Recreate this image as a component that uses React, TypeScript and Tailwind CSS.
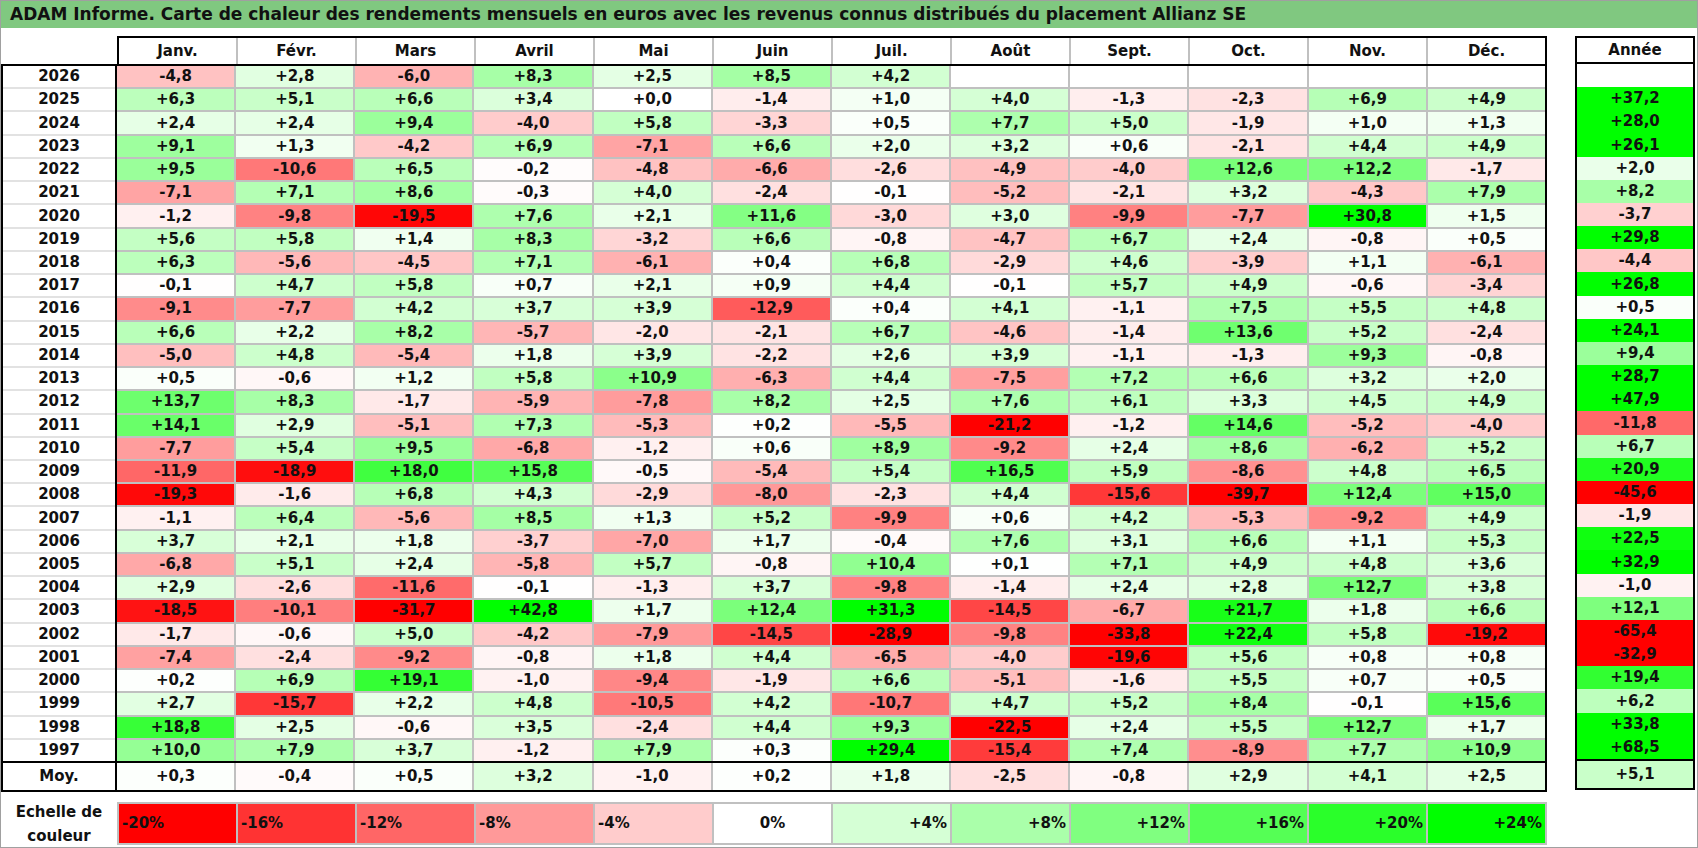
import React from "react";

const MONTHS = ["Janv.", "Févr.", "Mars", "Avril", "Mai", "Juin", "Juil.", "Août", "Sept.", "Oct.", "Nov.", "Déc."];

// year | 12 months | année  ("_" = empty)
const RAW = `2026|-4,8 +2,8 -6,0 +8,3 +2,5 +8,5 +4,2 _ _ _ _ _|_
2025|+6,3 +5,1 +6,6 +3,4 +0,0 -1,4 +1,0 +4,0 -1,3 -2,3 +6,9 +4,9|+37,2
2024|+2,4 +2,4 +9,4 -4,0 +5,8 -3,3 +0,5 +7,7 +5,0 -1,9 +1,0 +1,3|+28,0
2023|+9,1 +1,3 -4,2 +6,9 -7,1 +6,6 +2,0 +3,2 +0,6 -2,1 +4,4 +4,9|+26,1
2022|+9,5 -10,6 +6,5 -0,2 -4,8 -6,6 -2,6 -4,9 -4,0 +12,6 +12,2 -1,7|+2,0
2021|-7,1 +7,1 +8,6 -0,3 +4,0 -2,4 -0,1 -5,2 -2,1 +3,2 -4,3 +7,9|+8,2
2020|-1,2 -9,8 -19,5 +7,6 +2,1 +11,6 -3,0 +3,0 -9,9 -7,7 +30,8 +1,5|-3,7
2019|+5,6 +5,8 +1,4 +8,3 -3,2 +6,6 -0,8 -4,7 +6,7 +2,4 -0,8 +0,5|+29,8
2018|+6,3 -5,6 -4,5 +7,1 -6,1 +0,4 +6,8 -2,9 +4,6 -3,9 +1,1 -6,1|-4,4
2017|-0,1 +4,7 +5,8 +0,7 +2,1 +0,9 +4,4 -0,1 +5,7 +4,9 -0,6 -3,4|+26,8
2016|-9,1 -7,7 +4,2 +3,7 +3,9 -12,9 +0,4 +4,1 -1,1 +7,5 +5,5 +4,8|+0,5
2015|+6,6 +2,2 +8,2 -5,7 -2,0 -2,1 +6,7 -4,6 -1,4 +13,6 +5,2 -2,4|+24,1
2014|-5,0 +4,8 -5,4 +1,8 +3,9 -2,2 +2,6 +3,9 -1,1 -1,3 +9,3 -0,8|+9,4
2013|+0,5 -0,6 +1,2 +5,8 +10,9 -6,3 +4,4 -7,5 +7,2 +6,6 +3,2 +2,0|+28,7
2012|+13,7 +8,3 -1,7 -5,9 -7,8 +8,2 +2,5 +7,6 +6,1 +3,3 +4,5 +4,9|+47,9
2011|+14,1 +2,9 -5,1 +7,3 -5,3 +0,2 -5,5 -21,2 -1,2 +14,6 -5,2 -4,0|-11,8
2010|-7,7 +5,4 +9,5 -6,8 -1,2 +0,6 +8,9 -9,2 +2,4 +8,6 -6,2 +5,2|+6,7
2009|-11,9 -18,9 +18,0 +15,8 -0,5 -5,4 +5,4 +16,5 +5,9 -8,6 +4,8 +6,5|+20,9
2008|-19,3 -1,6 +6,8 +4,3 -2,9 -8,0 -2,3 +4,4 -15,6 -39,7 +12,4 +15,0|-45,6
2007|-1,1 +6,4 -5,6 +8,5 +1,3 +5,2 -9,9 +0,6 +4,2 -5,3 -9,2 +4,9|-1,9
2006|+3,7 +2,1 +1,8 -3,7 -7,0 +1,7 -0,4 +7,6 +3,1 +6,6 +1,1 +5,3|+22,5
2005|-6,8 +5,1 +2,4 -5,8 +5,7 -0,8 +10,4 +0,1 +7,1 +4,9 +4,8 +3,6|+32,9
2004|+2,9 -2,6 -11,6 -0,1 -1,3 +3,7 -9,8 -1,4 +2,4 +2,8 +12,7 +3,8|-1,0
2003|-18,5 -10,1 -31,7 +42,8 +1,7 +12,4 +31,3 -14,5 -6,7 +21,7 +1,8 +6,6|+12,1
2002|-1,7 -0,6 +5,0 -4,2 -7,9 -14,5 -28,9 -9,8 -33,8 +22,4 +5,8 -19,2|-65,4
2001|-7,4 -2,4 -9,2 -0,8 +1,8 +4,4 -6,5 -4,0 -19,6 +5,6 +0,8 +0,8|-32,9
2000|+0,2 +6,9 +19,1 -1,0 -9,4 -1,9 +6,6 -5,1 -1,6 +5,5 +0,7 +0,5|+19,4
1999|+2,7 -15,7 +2,2 +4,8 -10,5 +4,2 -10,7 +4,7 +5,2 +8,4 -0,1 +15,6|+6,2
1998|+18,8 +2,5 -0,6 +3,5 -2,4 +4,4 +9,3 -22,5 +2,4 +5,5 +12,7 +1,7|+33,8
1997|+10,0 +7,9 +3,7 -1,2 +7,9 +0,3 +29,4 -15,4 +7,4 -8,9 +7,7 +10,9|+68,5`;

const ROWS = RAW.split("\n").map(line => {
  const [year, months, total] = line.split("|");
  return { year, months: months.split(" "), total };
});

const AVG = "+0,3 -0,4 +0,5 +3,2 -1,0 +0,2 +1,8 -2,5 -0,8 +2,9 +4,1 +2,5".split(" ");
const AVG_TOTAL = "+5,1";

const SCALE = [-20, -16, -12, -8, -4, 0, 4, 8, 12, 16, 20, 24];

// red reaches full at -20, green at +24
function heat(v: number) {
  if (v < 0) {
    const c = Math.round(255 * (1 - Math.min(1, -v / 20)));
    return `rgb(255,${c},${c})`;
  }
  const c = Math.round(255 * (1 - Math.min(1, v / 24)));
  return `rgb(${c},255,${c})`;
}

function bg(s: string) {
  if (s === "_") return "#ffffff";
  return heat(parseFloat(s.replace(",", ".")));
}

function Cell({ value }: { value: string }) {
  return (
    <div className="flex items-center justify-center leading-none" style={{ background: bg(value) }}>
      {value === "_" ? "" : value}
    </div>
  );
}

export default function App() {
  return (
    <div className="w-[1698px] h-[848px] bg-white border border-[#a0a0a0] flex flex-col overflow-hidden font-['DejaVu_Sans',sans-serif] font-bold text-[15px] text-[#111]">
      {/* Title */}
      <div className="h-[27px] shrink-0 bg-[#80c880] flex items-center pl-[9px] text-[17px] leading-none">
        ADAM Informe. Carte de chaleur des rendements mensuels en euros avec les revenus connus distribués du placement Allianz SE
      </div>

      <div className="mt-[8px] flex items-start">
        {/* Monthly table */}
        <div className="w-[1546px] flex flex-col">
          <div className="flex h-[28px]">
            <div className="w-[116px]" />
            <div className="w-[1430px] border-t-2 border-x-2 border-black">
              <div className="grid grid-cols-12 gap-x-[2px] bg-[#c0c0c0] h-full">
                {MONTHS.map(m => (
                  <div key={m} className="bg-white flex items-center justify-center leading-none">{m}</div>
                ))}
              </div>
            </div>
          </div>

          <div className="border-2 border-black flex flex-col">
            <div className="flex h-[695px]">
              <div className="w-[114px] border-r-2 border-black grid grid-rows-[repeat(30,minmax(0,1fr))] gap-y-[2px] bg-[#e2e2e2]">
                {ROWS.map(r => (
                  <div key={r.year} className="bg-white flex items-center justify-center leading-none">{r.year}</div>
                ))}
              </div>
              <div className="flex-1 grid grid-cols-12 grid-rows-[repeat(30,minmax(0,1fr))] gap-[2px] bg-[#c0c0c0]">
                {ROWS.map(r => r.months.map((v, i) => <Cell key={r.year + i} value={v} />))}
              </div>
            </div>
            <div className="flex h-[29px] border-t-2 border-black">
              <div className="w-[114px] border-r-2 border-black flex items-center justify-center leading-none">Moy.</div>
              <div className="flex-1 grid grid-cols-12 gap-x-[2px] bg-[#c0c0c0]">
                {AVG.map((v, i) => <Cell key={i} value={v} />)}
              </div>
            </div>
          </div>

          {/* Colour scale */}
          <div className="flex mt-[10px] h-[43px]">
            <div className="w-[116px] flex flex-col items-center justify-center leading-[24px] text-center">
              <span>Echelle de</span>
              <span>couleur</span>
            </div>
            <div className="w-[1430px] border-2 border-[#c0c0c0] grid grid-cols-12 gap-x-[2px] bg-[#c0c0c0]">
              {SCALE.map(s => (
                <div
                  key={s}
                  className={
                    "flex items-center leading-none " +
                    (s < 0 ? "justify-start pl-[3px]" : s === 0 ? "justify-center" : "justify-end pr-[3px]")
                  }
                  style={{ background: heat(s) }}
                >
                  {s > 0 ? `+${s}%` : `${s}%`}
                </div>
              ))}
            </div>
          </div>
        </div>

        {/* Year totals */}
        <div className="ml-[28px] w-[120px] border-2 border-black flex flex-col">
          <div className="h-[26px] flex items-center justify-center leading-none border-b-2 border-black">Année</div>
          <div className="h-[695px] grid grid-rows-[repeat(30,minmax(0,1fr))]">
            {ROWS.map(r => <Cell key={r.year} value={r.total} />)}
          </div>
          <div className="h-[29px] border-t-2 border-black grid">
            <Cell value={AVG_TOTAL} />
          </div>
        </div>
      </div>
    </div>
  );
}
